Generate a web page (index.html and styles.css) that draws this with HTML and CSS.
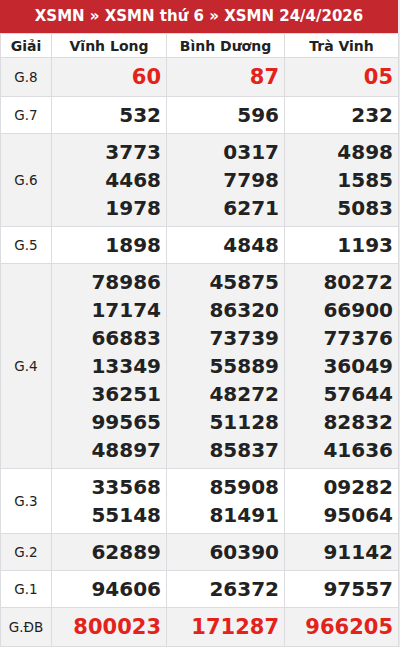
FILE: index.html
```html
<!DOCTYPE html>
<html lang="vi">
<head>
<meta charset="utf-8">
<link rel="stylesheet" href="styles.css">
</head>
<body>
<div class="box">
  <div class="title">XSMN » XSMN thứ 6 » XSMN 24/4/2026</div>
  <table class="kq">
    <colgroup><col class="c1"><col class="c2"><col class="c3"><col class="c4"></colgroup>
    <thead>
      <tr><th>Giải</th><th>Vĩnh Long</th><th>Bình Dương</th><th>Trà Vinh</th></tr>
    </thead>
    <tbody>
      <tr class="odd"><td class="g">G.8</td><td class="n red">60</td><td class="n red">87</td><td class="n red">05</td></tr>
      <tr><td class="g">G.7</td><td class="n">532</td><td class="n">596</td><td class="n">232</td></tr>
      <tr class="odd"><td class="g">G.6</td><td class="n">3773<br>4468<br>1978</td><td class="n">0317<br>7798<br>6271</td><td class="n">4898<br>1585<br>5083</td></tr>
      <tr><td class="g">G.5</td><td class="n">1898</td><td class="n">4848</td><td class="n">1193</td></tr>
      <tr class="odd"><td class="g">G.4</td><td class="n">78986<br>17174<br>66883<br>13349<br>36251<br>99565<br>48897</td><td class="n">45875<br>86320<br>73739<br>55889<br>48272<br>51128<br>85837</td><td class="n">80272<br>66900<br>77376<br>36049<br>57644<br>82832<br>41636</td></tr>
      <tr><td class="g">G.3</td><td class="n">33568<br>55148</td><td class="n">85908<br>81491</td><td class="n">09282<br>95064</td></tr>
      <tr class="odd"><td class="g">G.2</td><td class="n">62889</td><td class="n">60390</td><td class="n">91142</td></tr>
      <tr><td class="g">G.1</td><td class="n">94606</td><td class="n">26372</td><td class="n">97557</td></tr>
      <tr class="odd"><td class="g">G.ĐB</td><td class="n red">800023</td><td class="n red">171287</td><td class="n red">966205</td></tr>
    </tbody>
  </table>
</div>
</body>
</html>
```
FILE: styles.css
```css
html, body {
  margin: 0;
  padding: 0;
  background: #e9e9ee;
}
body {
  font-family: "DejaVu Sans", sans-serif;
  color: #222;
}
.box {
  width: 398px;
  background: #fff;
}
.title {
  background: #c5272f;
  color: #fff;
  font-weight: bold;
  font-size: 15px;
  height: 33px;
  line-height: 33px;
  text-align: center;
}
.kq {
  width: 398px;
  border-collapse: collapse;
  table-layout: fixed;
}
.c1 { width: 51px; }
.c2 { width: 115px; }
.c3 { width: 118px; }
.c4 { width: 114px; }
.kq th, .kq td {
  border: 1px solid #dcdce0;
}
.kq th {
  font-size: 14px;
  font-weight: bold;
  height: 23px;
  padding: 0;
  text-align: center;
  background: #fff;
}
.kq td {
  padding: 4px 5px 4px 5px;
  vertical-align: middle;
}
.kq tr.odd td {
  background: #f2f2f2;
}
.g {
  text-align: center;
  font-size: 13.5px;
}
.n {
  text-align: right;
  font-weight: bold;
  font-size: 20px;
  line-height: 28px;
}
.kq td.red {
  color: #e3231b;
  font-size: 21px;
  line-height: 30px;
}
```
